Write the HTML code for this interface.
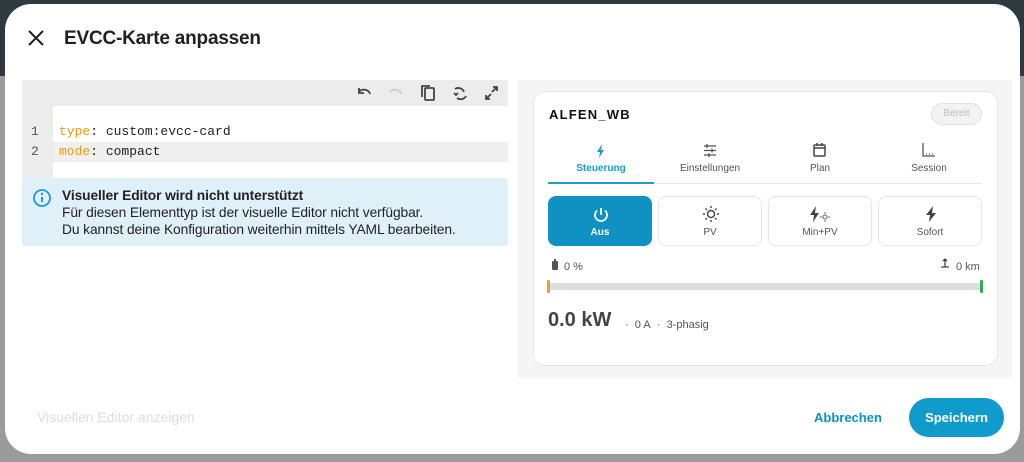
<!DOCTYPE html>
<html><head><meta charset="utf-8"><style>
*{box-sizing:border-box;margin:0;padding:0}
body{width:1024px;height:462px;overflow:hidden;position:relative;font-family:"Liberation Sans",sans-serif;background:#9b9b9b}
.topbg{position:absolute;left:0;top:0;width:1024px;height:76px;background:#2f3a40}
.dlg{position:absolute;left:5px;top:4px;width:1015px;height:450px;background:#fff;border-radius:26px}
.abs{position:absolute}
.title{position:absolute;left:64px;top:28px;font-size:19px;color:#212121;font-weight:bold;letter-spacing:-0.2px}
.ed{position:absolute;left:22px;top:80px;width:486px;height:98px;background:#ececec}
.code{position:absolute;left:53px;top:106px;width:455px;height:72px;background:#fff}
.hl{position:absolute;left:53px;top:142px;width:455px;height:20px;background:#efefef}
.ln{position:absolute;left:31px;font-family:"Liberation Mono",monospace;font-size:13px;color:#555}
.cl{position:absolute;left:59px;font-family:"Liberation Mono",monospace;font-size:13px;color:#222}
.k{color:#e99a13}
.info{position:absolute;left:22px;top:178px;width:486px;height:68px;background:#dff0f8;border-radius:3px;font-size:13.8px;color:#222;line-height:17px;padding:9px 0 0 40px;letter-spacing:-0.1px}
.panel{position:absolute;left:518px;top:80px;width:494px;height:298px;background:#f5f5f5}
.card{position:absolute;left:533px;top:91px;width:465px;height:275px;background:#fff;border:1px solid #e6e6e6;border-radius:12px}
.tab{position:absolute;top:163px;width:106px;text-align:center;font-size:10px;color:#555}
.btn{position:absolute;top:196px;width:104px;height:50px;border:1px solid #e6e6e6;border-radius:8px;text-align:center;font-size:10px;color:#555}
.btn span{position:absolute;left:0;right:0;top:30px}
</style></head><body>
<div class="topbg"></div>
<div class="dlg"></div>
<svg class="abs" style="left:27px;top:29px" width="18" height="18" viewBox="0 0 18 18"><path d="M2 2L16 16M16 2L2 16" stroke="#222" stroke-width="2"/></svg>
<div class="title">EVCC-Karte anpassen</div>
<div class="ed"></div>
<div class="code"></div>
<div class="hl"></div>
<svg class="abs" style="left:356px;top:84px" width="150" height="18" viewBox="0 0 150 18" fill="none" stroke="#444" stroke-width="1.8">
<path d="M3 8a6 5 0 0 1 11 2M3 4v5h5"/>
<path d="M45 10a6 5 0 0 0-11-2" stroke="#ccc"/>
<rect x="69" y="4" width="9" height="12" rx="1"/><path d="M66 13V2h8"/>
<path d="M99 5a6 6 0 0 1 9 3M110 12a6 6 0 0 1-9 2M98 9l2 2 2-2"/>
<path d="M130 15l5-5M130 11v4h4M141 3l-5 5M137 3h4v4"/>
</svg>
<div class="ln" style="top:124px">1</div><div class="ln" style="top:144px">2</div>
<div class="cl" style="top:124px"><span class="k">type</span>: custom:evcc-card</div>
<div class="cl" style="top:144px"><span class="k">mode</span>: compact</div>
<div class="info"><svg class="abs" style="left:10px;top:10px" width="20" height="20" viewBox="0 0 20 20"><circle cx="10" cy="10" r="8" fill="none" stroke="#1c9ad6" stroke-width="1.8"/><path d="M10 9v5" stroke="#1c9ad6" stroke-width="2"/><circle cx="10" cy="6" r="1.2" fill="#1c9ad6"/></svg><b>Visueller Editor wird nicht unterstützt</b><br>Für diesen Elementtyp ist der visuelle Editor nicht verfügbar.<br>Du kannst deine Konfiguration weiterhin mittels YAML bearbeiten.</div>
<div class="abs" style="left:37px;top:409px;font-size:14px;color:#ddd">Visuellen Editor anzeigen</div>
<div class="abs" style="left:814px;top:410px;font-size:13px;color:#0993c4;font-weight:bold">Abbrechen</div>
<div class="abs" style="left:909px;top:398px;width:95px;height:39px;border-radius:20px;background:#0f9ccc;color:#fff;font-size:13px;font-weight:bold;text-align:center;line-height:39px">Speichern</div>
<div class="panel"></div>
<div class="card"></div>
<div class="abs" style="left:549px;top:107px;font-size:13px;font-weight:bold;letter-spacing:1.2px;color:#111">ALFEN_WB</div>
<div class="abs" style="left:931px;top:103px;width:51px;height:22px;border:1px solid #e0e0e0;border-radius:11px;background:#f3f3f3;color:#bbb;font-size:10px;text-align:center;line-height:20px">Bereit</div>
<svg class="abs" style="left:596px;top:144px" width="10" height="14" viewBox="0 0 10 14"><path d="M6 0L1 8h3l-1 6 5-8H5z" fill="#1b9bd0"/></svg>
<svg class="abs" style="left:703px;top:144px" width="14" height="13" viewBox="0 0 14 13" stroke="#555" stroke-width="1.3"><path d="M1 2h12M1 6.5h12M1 11h12M4 0v4M9 4.5v4M6 9v4"/></svg>
<svg class="abs" style="left:813px;top:143px" width="13" height="14" viewBox="0 0 13 14" fill="none" stroke="#444" stroke-width="1.5"><rect x="1" y="2" width="11" height="11" rx="1"/><path d="M1 5h11M4 0v3M9 0v3"/></svg>
<svg class="abs" style="left:922px;top:143px" width="14" height="14" viewBox="0 0 14 14" fill="none" stroke="#555" stroke-width="1.3"><path d="M1 0v13h12M4 11h1M7 11h1M10 11h1"/></svg>
<div class="tab" style="left:548px;color:#1b9bd0;font-weight:bold">Steuerung</div>
<div class="tab" style="left:657px">Einstellungen</div>
<div class="tab" style="left:767px">Plan</div>
<div class="tab" style="left:876px">Session</div>
<div class="abs" style="left:548px;top:183px;width:434px;height:1px;background:#e6e6e6"></div>
<div class="abs" style="left:548px;top:182px;width:106px;height:2px;background:#1b9bd0"></div>
<div class="btn" style="left:548px;background:#0f92c2;border-color:#0f92c2;color:#fff;font-weight:bold"><svg class="abs" style="left:43px;top:9px" width="18" height="18" viewBox="0 0 18 18" fill="none" stroke="#fff" stroke-width="1.8"><path d="M9 2v7M5 4.5a6 6 0 1 0 8 0"/></svg><span>Aus</span></div>
<div class="btn" style="left:658px"><svg class="abs" style="left:44px;top:9px" width="16" height="16" viewBox="0 0 16 16" fill="none" stroke="#444" stroke-width="1.4"><circle cx="8" cy="8" r="3.5"/><path d="M8 0v2M8 14v2M0 8h2M14 8h2M2.5 2.5l1.4 1.4M12.1 12.1l1.4 1.4M2.5 13.5l1.4-1.4M12.1 3.9l1.4-1.4"/></svg><span>PV</span></div>
<div class="btn" style="left:768px"><svg class="abs" style="left:40px;top:9px" width="24" height="16" viewBox="0 0 24 16"><path d="M7 0L1 9h4l-1 7 6-9H6z" fill="#444"/><circle cx="16" cy="11" r="2" fill="none" stroke="#666"/><path d="M16 6v2M16 14v2M11 11h2M19 11h2" stroke="#666"/></svg><span>Min+PV</span></div>
<div class="btn" style="left:878px"><svg class="abs" style="left:46px;top:9px" width="12" height="16" viewBox="0 0 12 16"><path d="M8 0L1 9h4l-1 7 7-9H7z" fill="#444"/></svg><span>Sofort</span></div>
<svg class="abs" style="left:552px;top:259px" width="6" height="11" viewBox="0 0 6 11"><rect x="0" y="2" width="6" height="9" rx="1" fill="#555"/><rect x="2" y="0" width="2" height="2" fill="#555"/></svg>
<div class="abs" style="left:564px;top:261px;font-size:11px;color:#555">0 %</div>
<svg class="abs" style="left:940px;top:258px" width="10" height="10" viewBox="0 0 10 10" stroke="#444" stroke-width="1.3"><path d="M5 1v8M1 9h8M3 3l2-2 2 2"/></svg>
<div class="abs" style="left:956px;top:261px;font-size:11px;color:#555">0 km</div>
<div class="abs" style="left:548px;top:283px;width:434px;height:7px;background:#ddd"></div>
<div class="abs" style="left:547px;top:280px;width:3px;height:13px;background:#f0a020;border-radius:1px"></div>
<div class="abs" style="left:980px;top:280px;width:3px;height:13px;background:#2bb04a;border-radius:1px"></div>
<div class="abs" style="left:548px;top:309px;font-size:20px;font-weight:bold;color:#444">0.0 kW</div>
<div class="abs" style="left:625px;top:319px;font-size:11px;color:#555">·&nbsp;&nbsp;0 A&nbsp;&nbsp;·&nbsp;&nbsp;3-phasig</div>
</body></html>
